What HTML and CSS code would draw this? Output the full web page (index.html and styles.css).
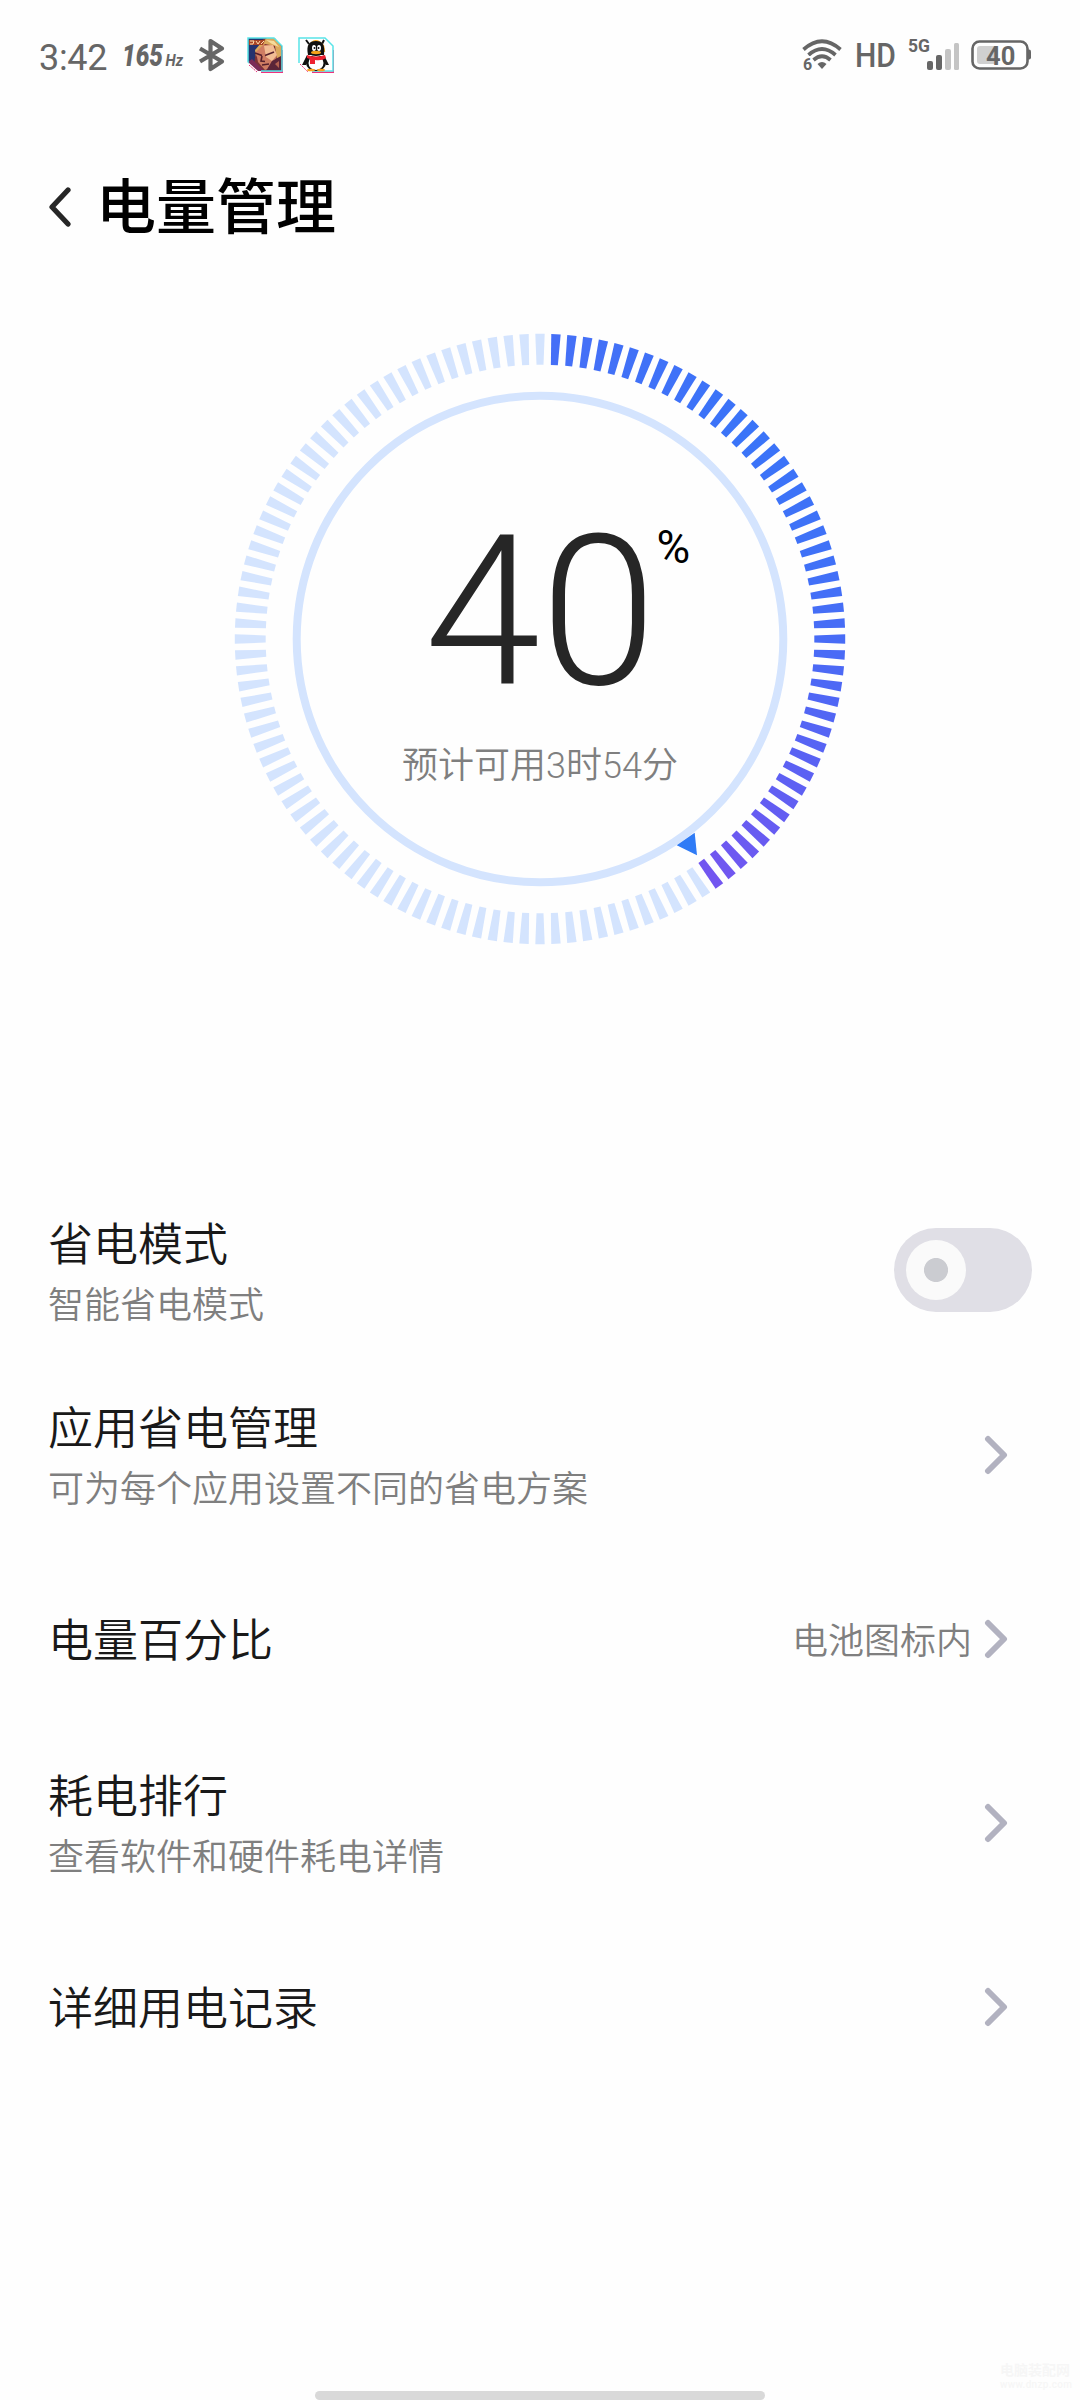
FILE: index.html
```html
<!DOCTYPE html>
<html lang="zh-CN">
<head>
<meta charset="utf-8">
<title>电量管理</title>
<link rel="stylesheet" href="styles.css">
</head>
<body>
<div class="screen">
  <header class="status">
    <span class="clock">3:42</span>
    <svg class="rate" width="62" height="44" viewBox="0 0 62 44">
      <text class="rate-num" x="0" y="33" textLength="41" lengthAdjust="spacingAndGlyphs">165</text>
      <text class="rate-unit" x="43.500" y="33" textLength="17.500" lengthAdjust="spacingAndGlyphs">Hz</text>
    </svg>
    <svg class="bt" width="28" height="34" viewBox="0 0 28 34"><path d="M2 10.500 24 23.500 12.500 31V3L24 10.500 2 23.500" fill="none" stroke="#666" stroke-width="4.200" stroke-linejoin="round"/></svg>
    <svg class="app" width="36" height="36" viewBox="0 0 36 36">
      <path d="M36 13V36H14" fill="none" stroke="#f0307c" stroke-width="3"/>
      <path d="M1 1H27L35 9V34H12L1 24Z" fill="#7c3238"/>
      <path d="M1 1H17L9 13 7 28 1 24Z" fill="#25336f"/>
      <path d="M15 5 20 1H28L34 9V26L30 23 28 9 18 7 11 14 9 20 8 13Z" fill="#dba85c"/>
      <path d="M19 3 27 4 32 10 25 7Z" fill="#f6dc9c"/>
      <path d="M9 15 16 8 26 8 30 18 26 30 18 33 11 25Z" fill="#cf7d63"/>
      <path d="M17 9 26 8 30 18 25 24 19 20Z" fill="#f2bd94"/>
      <path d="M8 16 15 18.500M18 18.500 27 15M15 19 14 24 18 24.500M15 28 22 27" stroke="#56202c" stroke-width="1.600" fill="none"/>
      <path d="M25 24 34 19V34H19Z" fill="#5b2438"/><path d="M28 27 32 24V31Z" fill="#b4604f"/>
      <path d="M1 25 5 22 17 34H11Z" fill="#7b2b58"/>
      <path d="M2 3H18L16 8H2Z" fill="#a84426"/><path d="M3 4H7L6 7H3M9 4 11 7 13 4M14 7 17 4" stroke="#ffe0b0" stroke-width="1" fill="none"/>
      <path d="M1 27V1H27L35 9V34H14" fill="none" stroke="#58e4e8" stroke-width="1.500"/>
      <path d="M0 25V36H12Z" fill="#fefefe"/>
      <path d="M2 28 10 35" stroke="#f0307c" stroke-width="1" stroke-dasharray="2 1"/>
    </svg>
    <svg class="app app-qq" width="36" height="36" viewBox="0 0 36 36">
      <path d="M36 13V36H14" fill="none" stroke="#f0307c" stroke-width="3"/>
      <path d="M1 1H27L35 9V34H12L1 24Z" fill="#fff"/>
      <path d="M1 26V1H27L35 9V34H14" fill="none" stroke="#58e4e8" stroke-width="1.500"/>
      <path d="M2 27 10 35" stroke="#f0307c" stroke-width="1" stroke-dasharray="2 1"/>
      <path d="M8 3 11 7M26 3 24 7" stroke="#111" stroke-width="2"/>
      <path d="M11 10Q17 -1 25 9L26 15" fill="none" stroke="#f6a21c" stroke-width="2.500"/>
      <path d="M9 18 4 28 8 28 11 22ZM26 18 31 28 28 28 24 22Z" fill="#111"/>
      <ellipse cx="18" cy="26" rx="10" ry="8" fill="#111"/><ellipse cx="18" cy="26" rx="7.500" ry="7" fill="#fff"/>
      <path d="M10 18C8 8 11 4 18 4S27 8 26 18Z" fill="#111"/>
      <ellipse cx="16" cy="11" rx="2" ry="3" fill="#fff"/><ellipse cx="21" cy="11" rx="2" ry="3" fill="#fff"/>
      <circle cx="16.500" cy="11" r="1" fill="#111"/><circle cx="20.500" cy="11" r="1" fill="#111"/>
      <ellipse cx="18" cy="15.500" rx="5" ry="1.700" fill="#f6a21c"/>
      <path d="M9 18Q18 21 27 18L28 21Q24 24 17 23V27H12V22L9 21Z" fill="#ee2230"/>
      <ellipse cx="13" cy="33" rx="4" ry="1.300" fill="#f6a21c"/><ellipse cx="23" cy="33" rx="4" ry="1.300" fill="#f6a21c"/>
    </svg>
    <span class="spacer"></span>
    <svg class="wifi" width="40" height="44" viewBox="0 -5 40 44">
      <g fill="none" stroke="#666" stroke-width="3.700">
        <path d="M1.500 11.500Q20 -5 38.500 11.500"/><path d="M6.500 17Q20 5 33.500 17"/><path d="M11.500 22Q20 14.500 28.500 22"/>
      </g>
      <path d="M15.500 26Q20 22 24.500 26L20 31Z" fill="#666"/>
      <text class="wifi-gen" x="1" y="32">6</text>
    </svg>
    <svg class="hd" width="42" height="44" viewBox="0 -5 42 44"><text x="0" y="28.500" textLength="41" lengthAdjust="spacingAndGlyphs">HD</text></svg>
    <svg class="signal" width="54" height="46" viewBox="0 -5 54 46">
      <text class="net" x="0" y="15" textLength="22" lengthAdjust="spacingAndGlyphs">5G</text>
      <rect x="19" y="24" width="6" height="9" rx="2" fill="#666"/><rect x="28" y="18" width="6" height="15" rx="2" fill="#666"/>
      <rect x="37" y="12" width="6" height="21" rx="2" fill="#c4c4c4"/><rect x="46" y="6" width="5" height="27" rx="1.500" fill="#c4c4c4"/>
    </svg>
    <svg class="battery" width="62" height="32" viewBox="0 0 62 32">
      <rect x="1.500" y="2.500" width="55" height="27" rx="7" fill="none" stroke="#666" stroke-width="2.600"/>
      <path d="M57 10.500H58Q60 10.500 60 12.500V18.500Q60 20.500 58 20.500H57Z" fill="#666"/>
      <rect x="6" y="7" width="21" height="18" rx="3" fill="#d0d0d0"/>
      <text class="bat-num" x="15" y="25.500">40</text>
    </svg>
  </header>

  <div class="titlebar">
    <svg class="back" width="24" height="40" viewBox="0 0 24 40"><path d="M20 3 4 20 20 37" fill="none" stroke="#262626" stroke-width="5.200" stroke-linecap="round" stroke-linejoin="round"/></svg>
    <h1>电量管理</h1>
  </div>

  <section class="gauge">
    <svg class="dial" width="612" height="612" viewBox="-306 -306 612 612">
      <g id="ticks"></g>
      <circle r="243.300" fill="none" stroke="#d4e4fe" stroke-width="8"/>
      <path d="M136.700 206.300 154.700 193.700 157 216.300Z" fill="#2f7bf6"/>
      <text class="level" x="-115.500" y="44.700">40</text>
      <text class="percent" x="116.500" y="-76">%</text>
    </svg>
    <p class="estimate">预计可用3时54分</p>
  </section>

  <main class="list">
    <div class="row">
      <div class="label"><div class="name">省电模式</div><div class="desc">智能省电模式</div></div>
      <div class="toggle"><div class="knob"></div></div>
    </div>
    <div class="row link">
      <div class="label"><div class="name">应用省电管理</div><div class="desc">可为每个应用设置不同的省电方案</div></div>
      <svg class="chev" width="24" height="40" viewBox="0 0 24 40"><path d="M4 4 20 20 4 36"/></svg>
    </div>
    <div class="row link">
      <div class="label single"><div class="name">电量百分比</div></div>
      <span class="value">电池图标内</span>
      <svg class="chev" width="24" height="40" viewBox="0 0 24 40"><path d="M4 4 20 20 4 36"/></svg>
    </div>
    <div class="row link">
      <div class="label"><div class="name">耗电排行</div><div class="desc">查看软件和硬件耗电详情</div></div>
      <svg class="chev" width="24" height="40" viewBox="0 0 24 40"><path d="M4 4 20 20 4 36"/></svg>
    </div>
    <div class="row link">
      <div class="label single"><div class="name">详细用电记录</div></div>
      <svg class="chev" width="24" height="40" viewBox="0 0 24 40"><path d="M4 4 20 20 4 36"/></svg>
    </div>
  </main>

  <footer class="foot">
    <div class="mark"><div class="mark-name">电脑装配网</div><div class="mark-url">www.dnzp.com</div></div>
    <div class="homebar"></div>
  </footer>
</div>
<script src="gauge.js"></script>
</body>
</html>
```
FILE: styles.css
```css
* { box-sizing: border-box; }
body {
  margin: 0;
  background: #fefefe;
  font-family: Roboto, "Noto Sans CJK SC", sans-serif;
  color: #191919;
}
.screen {
  width: 1080px;
  height: 2400px;
  display: flex;
  flex-direction: column;
  overflow: hidden;
}
h1, p { margin: 0; }
svg { display: block; flex: none; }

.status {
  height: 110px;
  padding: 0 47px 0 39px;
  display: flex;
  align-items: center;
}
.status text { fill: #666; }
.clock { font-size: 36px; line-height: 42px; color: #666; width: 83px; padding-top: 5px; font-weight: 400; letter-spacing: -0.300px; }
.rate-num { font-size: 31.500px; font-weight: 900; font-style: italic; }
.rate-unit { font-size: 17px; font-weight: 700; font-style: italic; }
.bt { margin-left: 14px; }
.app { margin-left: 21px; }
.app-qq { margin-left: 15px; }
.spacer { flex: 1; }
.wifi { margin-right: 13px; }
.wifi-gen { font-size: 16px; font-weight: 700; stroke: #fefefe; stroke-width: 4px; paint-order: stroke; }
.hd text { font-size: 34px; font-weight: 500; }
.hd { margin-right: 11px; }
.net { font-size: 19px; font-weight: 700; }
.signal { margin-right: 9px; }
.bat-num { font-size: 25.500px; font-weight: 700; }

.titlebar {
  height: 194px;
  padding: 0 47px 0 48px;
  display: flex;
  align-items: center;
}
.titlebar h1 {
  margin-left: 24px;
  padding-top: 4px;
  font-size: 60px;
  line-height: 80px;
  font-weight: 500;
  color: #000;
}

.gauge {
  height: 874px;
  padding-top: 29px;
  display: grid;
  justify-items: center;
  align-content: start;
}
.dial, .estimate { grid-area: 1 / 1; }
.level { font-size: 209px; font-weight: 300; fill: #262626; }
.percent { font-size: 46px; font-weight: 400; fill: #000; }
.estimate {
  padding-top: 406px;
  font-size: 36px;
  line-height: 54px;
  font-weight: 350;
  color: #7f7f7f;
}

.list { padding: 0 48px; }
.row { height: 184px; display: flex; align-items: center; }
.link { padding-right: 24px; }
.link .chev { margin-top: 2px; }
.label { flex: 1; padding-top: 5px; }
.single { padding-top: 7px; }
.name { font-size: 45px; line-height: 66px; font-weight: 350; }
.desc { font-size: 36px; line-height: 54px; color: #7f7f7f; font-weight: 350; }
.value { font-size: 36px; line-height: 52px; padding-top: 7px; color: #7f7f7f; margin-right: 12px; font-weight: 350; }
.chev path { fill: none; stroke: #b2b2c0; stroke-width: 6; stroke-linecap: round; stroke-linejoin: round; }
.toggle {
  width: 138px;
  height: 84px;
  border-radius: 42px;
  background: #e0dfe6;
  padding: 12px;
}
.knob {
  width: 60px;
  height: 60px;
  border-radius: 50%;
  background: radial-gradient(circle, #cbccd1 11.600px, #fafafa 12.400px);
}

.foot {
  flex: 1;
  display: flex;
  flex-direction: column;
  justify-content: flex-end;
  align-items: center;
}
.mark { align-self: flex-end; width: 80px; color: #f6f6f6; }
.mark-name { font-size: 14px; line-height: 18px; font-weight: 700; }
.mark-url { font-size: 10px; line-height: 12px; font-weight: 500; letter-spacing: 0.300px; }
.homebar { width: 450px; height: 9px; border-radius: 4.500px; background: #d9d9d9; }
```
FILE: gauge.js
```js
// Draws 120 ticks; the first 40% (clockwise from the top) carry the charge colours.
const TOTAL = 120;
const LEVEL = 40;
const stops = [
  [0, [70, 111, 247]],
  [45, [58, 116, 248]],
  [75, [64, 113, 247]],
  [100, [78, 104, 245]],
  [144, [114, 86, 240]]
];

function colorAt(angle) {
  for (let i = 1; i < stops.length; i++) {
    const [a0, c0] = stops[i - 1];
    const [a1, c1] = stops[i];
    if (angle <= a1) {
      const t = (angle - a0) / (a1 - a0);
      return "rgb(" + c0.map((v, k) => Math.round(v + (c1[k] - v) * t)).join(",") + ")";
    }
  }
  return "#7256f0";
}

const group = document.getElementById("ticks");
for (let i = 0; i < TOTAL; i++) {
  const tick = document.createElementNS("http://www.w3.org/2000/svg", "path");
  const angle = i * 360 / TOTAL;
  const charged = i >= 1 && i <= TOTAL * LEVEL / 100;
  tick.setAttribute("d", "M-4.7 -305.2H4.700L3.500 -274.300H-3.500Z");
  tick.setAttribute("transform", "rotate(" + angle + ")");
  tick.setAttribute("fill", charged ? colorAt(angle) : "#d4e4fe");
  group.appendChild(tick);
}
```
